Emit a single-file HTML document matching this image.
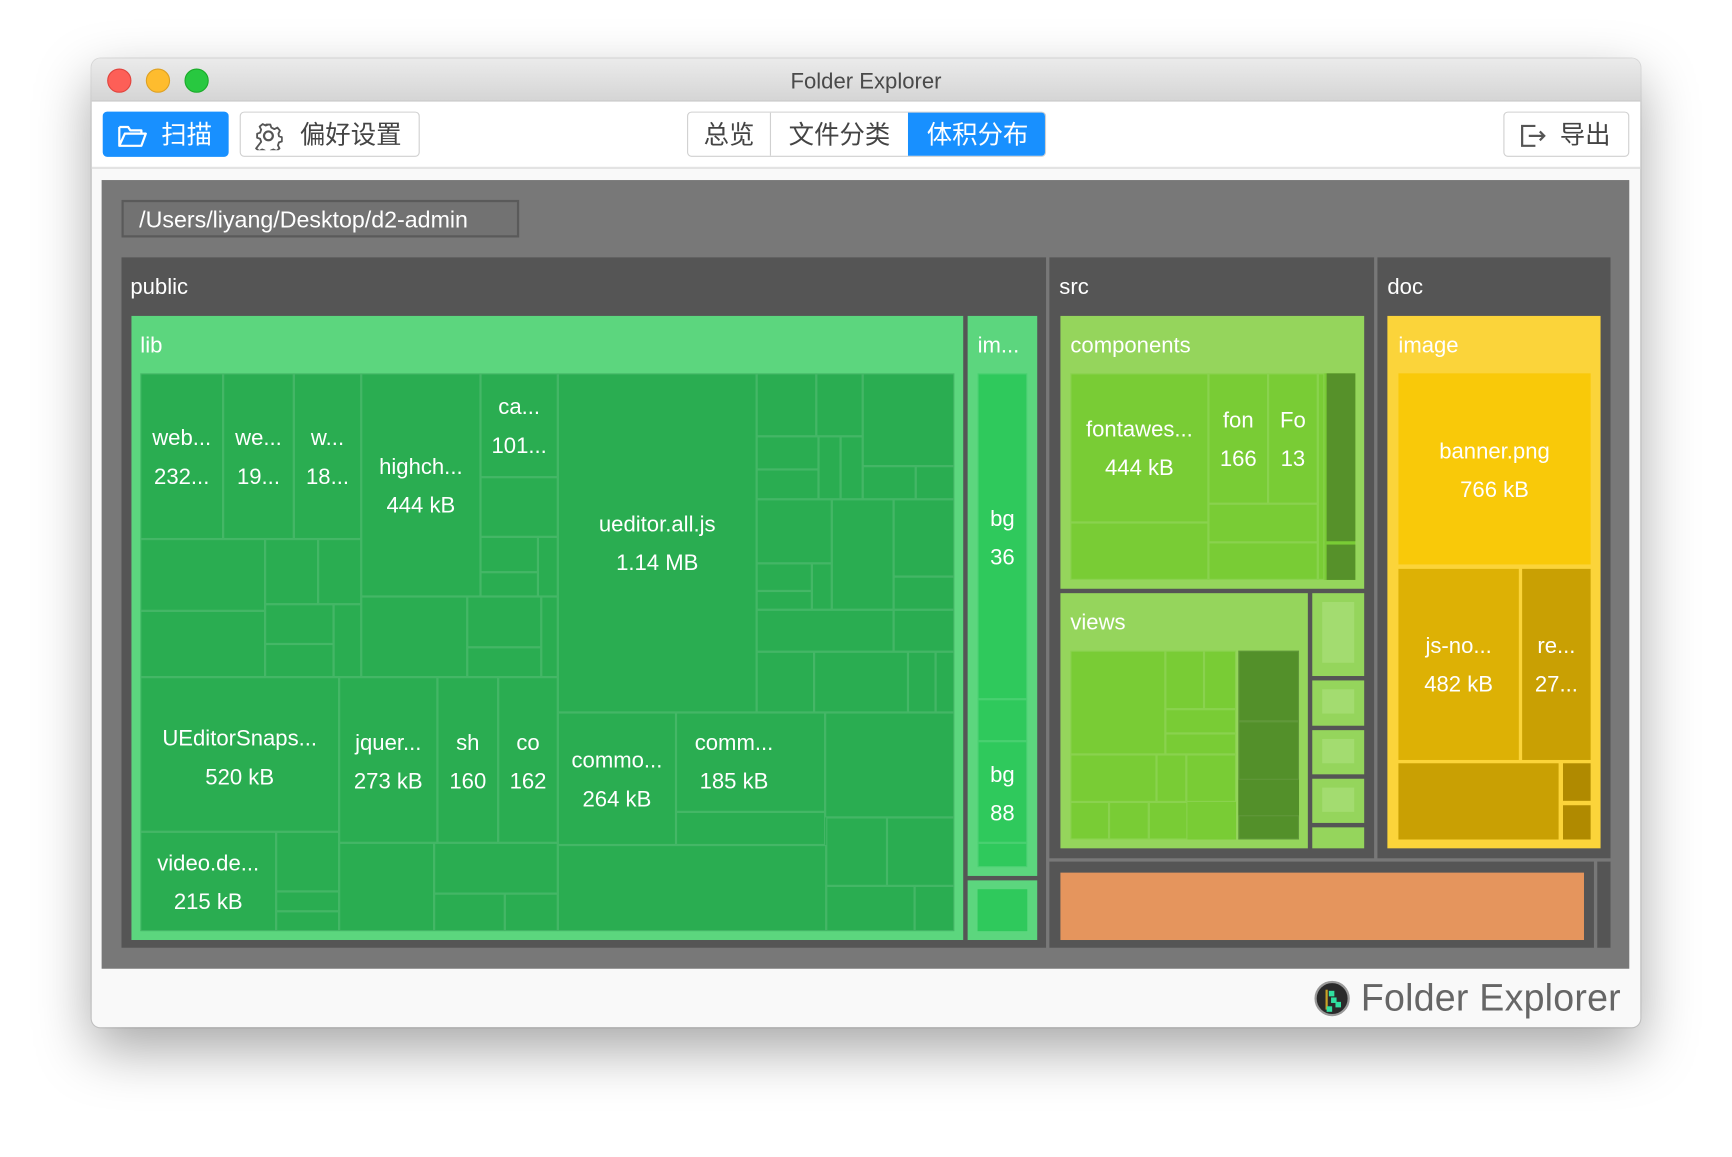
<!DOCTYPE html>
<html><head><meta charset="utf-8"><style>
*{margin:0;padding:0;box-sizing:border-box}
html,body{width:1732px;height:1156px;overflow:hidden;background:#fff;font-family:"Liberation Sans","Noto Sans CJK SC",sans-serif}
#s{position:absolute;left:0;top:0;width:1568px;height:1047px;transform:scale(1.1046);transform-origin:0 0}
.a{position:absolute}
.win{left:83px;top:53px;width:1402px;height:877px;border-radius:8px;background:#f9f9f9;box-shadow:0 20px 50px rgba(0,0,0,.35),0 0 0 1px rgba(0,0,0,.12);overflow:hidden}
.tb{left:0;top:0;width:1402px;height:39px;background:linear-gradient(#ebebeb,#d5d5d5);border-bottom:1px solid #c4c4c4;text-align:center;font-size:20px;line-height:42px;color:#4a4a4a}
.dot{width:22px;height:22px;border-radius:50%;top:9px}
.bar{left:0;top:39px;width:1402px;height:61px;background:#fff;border-bottom:2px solid #e3e3e3}
.btn{height:41px;border:1px solid #d0d0d0;border-radius:4px;background:#fff;color:#444;font-size:23px;line-height:41px;text-align:center}
.c{position:absolute;border:1px solid rgba(255,255,255,.13)}
.t{position:absolute;color:#fff;font-size:20px;text-align:center;line-height:35px;white-space:nowrap;margin-top:2px}
.g{background:#2aad51}
.lbl{position:absolute;color:#fff;font-size:20px;margin-top:2px}
</style></head><body><div id="s">
<div class="a win">
 <div class="a tb">Folder Explorer</div>
 <div class="a dot" style="left:14px;background:#fd5f57;border:1px solid #e0443e"></div>
 <div class="a dot" style="left:49px;background:#febc2e;border:1px solid #dea123"></div>
 <div class="a dot" style="left:84px;background:#28c840;border:1px solid #1aab29"></div>
 <div class="a bar"></div>
 <div class="a btn" style="left:10px;top:48px;width:114px;background:#1890ff;border-color:#1890ff;color:#fff">
  <svg style="position:absolute;left:12px;top:10px" width="28" height="22" viewBox="0 0 28 22"><path d="M2 3h8l2 3h10v3M2 3v17h20l4-11H7L2 20" fill="none" stroke="#fff" stroke-width="2" stroke-linejoin="round"/></svg>
  <span style="margin-left:38px">扫描</span></div>
 <div class="a btn" style="left:134px;top:48px;width:163px">
  <svg style="position:absolute;left:12px;top:8px" width="26" height="26" viewBox="0 0 26 26"><circle cx="13" cy="13" r="4" fill="none" stroke="#555" stroke-width="2"/><path d="M11 2h4l1 3 3 1.5 3-1.5 2.5 3-1.5 3 .5 2.5 3 1v4l-3 1-1 3 1.5 3-3 2.5-3-1.5-2.5 1-1 3h-4l-1-3-2.5-1-3 1.5-3-2.5L6 19l-1-3-3-1v-4l3-1 1-3-1.5-3 3-2.5 3 1.5 2.5-1z" fill="none" stroke="#555" stroke-width="1.8" stroke-linejoin="round" transform="scale(.92) translate(1 1)"/></svg>
  <span style="margin-left:38px">偏好设置</span></div>
 <div class="a btn" style="left:539px;top:48px;width:325px;overflow:hidden">
  <div class="a" style="left:0;top:0;width:75px;height:39px;border-right:1px solid #d0d0d0">总览</div>
  <div class="a" style="left:75px;top:0;width:124px;height:39px">文件分类</div>
  <div class="a" style="left:199px;top:-1px;width:126px;height:41px;background:#1890ff;color:#fff;line-height:43px">体积分布</div>
 </div>
 <div class="a btn" style="left:1278px;top:48px;width:114px">
  <svg style="position:absolute;left:14px;top:10px" width="24" height="22" viewBox="0 0 24 22"><path d="M14 2H2v18h12M8 11h14M18 7l4 4-4 4" fill="none" stroke="#555" stroke-width="2"/></svg>
  <span style="margin-left:34px">导出</span></div>
 <div class="a" style="left:1107px;top:835px;width:32px;height:32px;border-radius:50%;background:#2a2a2a;border:2px solid #999">
  <div class="a" style="left:8px;top:6px;width:2px;height:18px;background:#c9a227"></div>
  <div class="a" style="left:11px;top:7px;width:5px;height:5px;background:#30e0a0"></div>
  <div class="a" style="left:13px;top:13px;width:5px;height:5px;background:#30e0a0"></div>
  <div class="a" style="left:17px;top:17px;width:5px;height:5px;background:#30e0a0"></div>
  <div class="a" style="left:9px;top:21px;width:5px;height:5px;background:#30e0a0"></div>
 </div>
 <div class="a" style="left:1149px;top:832px;font-size:34px;color:#666;letter-spacing:.2px">Folder Explorer</div>
</div>

<div class="a" style="left:92px;top:163px;width:1383px;height:714px;background:#787878"></div>
<div class="a" style="left:110px;top:181px;width:360px;height:34px;border:2px solid #5a5a5a;background:#727272;color:#fff;font-size:21px;line-height:33px;padding-left:14px">/Users/liyang/Desktop/d2-admin</div>

<!-- public -->
<div class="a" style="left:110px;top:233px;width:837px;height:625px;background:#555"></div>
<div class="lbl" style="left:118px;top:247px">public</div>
<div class="a" style="left:119px;top:286px;width:753px;height:565px;background:#5cd67e"></div>
<div class="lbl" style="left:127px;top:300px">lib</div>
<div class="a g" style="left:127px;top:338px;width:737px;height:505px"></div>
<div class="c" style="left:127px;top:338px;width:75px;height:150px"></div>
<div class="c" style="left:202px;top:338px;width:64px;height:150px"></div>
<div class="c" style="left:266px;top:338px;width:61px;height:150px"></div>
<div class="c" style="left:327px;top:338px;width:108px;height:202px"></div>
<div class="c" style="left:435px;top:338px;width:70px;height:94px"></div>
<div class="c" style="left:435px;top:432px;width:70px;height:54px"></div>
<div class="c" style="left:435px;top:486px;width:52px;height:32px"></div>
<div class="c" style="left:435px;top:518px;width:52px;height:22px"></div>
<div class="c" style="left:487px;top:486px;width:18px;height:54px"></div>
<div class="c" style="left:505px;top:338px;width:180px;height:307px"></div>
<div class="c" style="left:685px;top:338px;width:54px;height:57px"></div>
<div class="c" style="left:739px;top:338px;width:42px;height:57px"></div>
<div class="c" style="left:781px;top:338px;width:83px;height:84px"></div>
<div class="c" style="left:685px;top:395px;width:56px;height:30px"></div>
<div class="c" style="left:685px;top:425px;width:56px;height:27px"></div>
<div class="c" style="left:741px;top:395px;width:20px;height:57px"></div>
<div class="c" style="left:761px;top:395px;width:20px;height:57px"></div>
<div class="c" style="left:781px;top:422px;width:48px;height:30px"></div>
<div class="c" style="left:829px;top:422px;width:35px;height:30px"></div>
<div class="c" style="left:685px;top:452px;width:68px;height:58px"></div>
<div class="c" style="left:753px;top:452px;width:56px;height:100px"></div>
<div class="c" style="left:809px;top:452px;width:55px;height:70px"></div>
<div class="c" style="left:685px;top:510px;width:50px;height:25px"></div>
<div class="c" style="left:685px;top:535px;width:50px;height:17px"></div>
<div class="c" style="left:735px;top:510px;width:18px;height:42px"></div>
<div class="c" style="left:809px;top:522px;width:55px;height:30px"></div>
<div class="c" style="left:685px;top:552px;width:124px;height:38px"></div>
<div class="c" style="left:809px;top:552px;width:55px;height:38px"></div>
<div class="c" style="left:685px;top:590px;width:52px;height:55px"></div>
<div class="c" style="left:737px;top:590px;width:85px;height:55px"></div>
<div class="c" style="left:822px;top:590px;width:25px;height:55px"></div>
<div class="c" style="left:847px;top:590px;width:17px;height:55px"></div>
<div class="c" style="left:127px;top:488px;width:113px;height:65px"></div>
<div class="c" style="left:127px;top:553px;width:113px;height:60px"></div>
<div class="c" style="left:240px;top:488px;width:48px;height:59px"></div>
<div class="c" style="left:288px;top:488px;width:39px;height:59px"></div>
<div class="c" style="left:240px;top:547px;width:62px;height:36px"></div>
<div class="c" style="left:240px;top:583px;width:62px;height:30px"></div>
<div class="c" style="left:302px;top:547px;width:25px;height:66px"></div>
<div class="c" style="left:327px;top:540px;width:96px;height:73px"></div>
<div class="c" style="left:423px;top:540px;width:67px;height:46px"></div>
<div class="c" style="left:423px;top:586px;width:67px;height:27px"></div>
<div class="c" style="left:490px;top:540px;width:15px;height:73px"></div>
<div class="c" style="left:127px;top:613px;width:180px;height:140px"></div>
<div class="c" style="left:127px;top:753px;width:123px;height:90px"></div>
<div class="c" style="left:250px;top:753px;width:57px;height:54px"></div>
<div class="c" style="left:250px;top:807px;width:57px;height:18px"></div>
<div class="c" style="left:250px;top:825px;width:57px;height:18px"></div>
<div class="c" style="left:307px;top:613px;width:89px;height:150px"></div>
<div class="c" style="left:396px;top:613px;width:55px;height:150px"></div>
<div class="c" style="left:451px;top:613px;width:54px;height:150px"></div>
<div class="c" style="left:307px;top:763px;width:86px;height:80px"></div>
<div class="c" style="left:393px;top:763px;width:112px;height:46px"></div>
<div class="c" style="left:393px;top:809px;width:64px;height:34px"></div>
<div class="c" style="left:457px;top:809px;width:48px;height:34px"></div>
<div class="c" style="left:505px;top:645px;width:107px;height:120px"></div>
<div class="c" style="left:612px;top:645px;width:135px;height:90px"></div>
<div class="c" style="left:612px;top:735px;width:135px;height:30px"></div>
<div class="c" style="left:747px;top:645px;width:117px;height:95px"></div>
<div class="c" style="left:505px;top:765px;width:243px;height:78px"></div>
<div class="c" style="left:748px;top:740px;width:55px;height:62px"></div>
<div class="c" style="left:803px;top:740px;width:61px;height:62px"></div>
<div class="c" style="left:748px;top:802px;width:80px;height:41px"></div>
<div class="c" style="left:828px;top:802px;width:36px;height:41px"></div>
<div class="t" style="left:127px;top:378px;width:75px">web...<br>232...</div>
<div class="t" style="left:202px;top:378px;width:64px">we...<br>19...</div>
<div class="t" style="left:266px;top:378px;width:61px">w...<br>18...</div>
<div class="t" style="left:327px;top:404px;width:108px">highch...<br>444 kB</div>
<div class="t" style="left:435px;top:350px;width:70px">ca...<br>101...</div>
<div class="t" style="left:505px;top:456px;width:180px">ueditor.all.js<br>1.14 MB</div>
<div class="t" style="left:127px;top:650px;width:180px">UEditorSnaps...<br>520 kB</div>
<div class="t" style="left:127px;top:763px;width:123px">video.de...<br>215 kB</div>
<div class="t" style="left:307px;top:654px;width:89px">jquer...<br>273 kB</div>
<div class="t" style="left:396px;top:654px;width:55px">sh<br>160</div>
<div class="t" style="left:451px;top:654px;width:54px">co<br>162</div>
<div class="t" style="left:505px;top:670px;width:107px">commo...<br>264 kB</div>
<div class="t" style="left:612px;top:654px;width:105px">comm...<br>185 kB</div>
<!-- im -->
<div class="a" style="left:876px;top:286px;width:63px;height:507px;background:#5cd67e"></div>
<div class="lbl" style="left:885px;top:300px">im...</div>
<div class="a" style="left:885px;top:338px;width:45px;height:447px;background:#2fc95c"></div>
<div class="c" style="left:885px;top:338px;width:45px;height:295px"></div>
<div class="c" style="left:885px;top:633px;width:45px;height:38px"></div>
<div class="c" style="left:885px;top:671px;width:45px;height:92px"></div>
<div class="c" style="left:885px;top:763px;width:45px;height:22px"></div>
<div class="t" style="left:885px;top:451px;width:45px">bg<br>36</div>
<div class="t" style="left:885px;top:683px;width:45px">bg<br>88</div>
<div class="a" style="left:876px;top:797px;width:63px;height:54px;background:#5cd67e"></div>
<div class="a" style="left:885px;top:805px;width:45px;height:38px;background:#2fc95c"></div>

<!-- src -->
<div class="a" style="left:950px;top:233px;width:294px;height:544px;background:#555"></div>
<div class="lbl" style="left:959px;top:247px">src</div>
<div class="a" style="left:960px;top:286px;width:275px;height:247px;background:#95d55c"></div>
<div class="lbl" style="left:969px;top:300px">components</div>
<div class="a" style="left:969px;top:338px;width:258px;height:187px;background:#79cc35"></div>
<div class="c" style="left:969px;top:338px;width:125px;height:135px"></div>
<div class="c" style="left:969px;top:473px;width:125px;height:52px"></div>
<div class="c" style="left:1094px;top:338px;width:54px;height:118px"></div>
<div class="c" style="left:1148px;top:338px;width:45px;height:118px"></div>
<div class="c" style="left:1094px;top:456px;width:99px;height:35px"></div>
<div class="c" style="left:1094px;top:491px;width:99px;height:34px"></div>
<div class="c" style="left:1193px;top:338px;width:6px;height:187px"></div>
<div class="a" style="left:1201px;top:338px;width:26px;height:152px;background:#56912a"></div>
<div class="a" style="left:1201px;top:493px;width:26px;height:32px;background:#56912a"></div>
<div class="t" style="left:969px;top:370px;width:125px">fontawes...<br>444 kB</div>
<div class="t" style="left:1094px;top:362px;width:54px">fon<br>166</div>
<div class="t" style="left:1148px;top:362px;width:45px">Fo<br>13</div>
<div class="a" style="left:960px;top:537px;width:224px;height:231px;background:#95d55c"></div>
<div class="lbl" style="left:969px;top:551px">views</div>
<div class="a" style="left:969px;top:589px;width:150px;height:171px;background:#79cc35"></div>
<div class="c" style="left:969px;top:589px;width:86px;height:94px"></div>
<div class="c" style="left:1055px;top:589px;width:35px;height:53px"></div>
<div class="c" style="left:1090px;top:589px;width:29px;height:53px"></div>
<div class="c" style="left:1055px;top:642px;width:64px;height:22px"></div>
<div class="c" style="left:1055px;top:664px;width:64px;height:19px"></div>
<div class="c" style="left:969px;top:683px;width:78px;height:43px"></div>
<div class="c" style="left:1047px;top:683px;width:27px;height:43px"></div>
<div class="c" style="left:1074px;top:683px;width:45px;height:43px"></div>
<div class="c" style="left:969px;top:726px;width:35px;height:34px"></div>
<div class="c" style="left:1004px;top:726px;width:36px;height:34px"></div>
<div class="c" style="left:1040px;top:726px;width:35px;height:34px"></div>
<div class="a" style="left:1121px;top:589px;width:55px;height:171px;background:#53902a"></div>
<div class="c" style="left:1121px;top:589px;width:55px;height:64px;border-color:rgba(255,255,255,.08)"></div>
<div class="c" style="left:1121px;top:653px;width:55px;height:53px;border-color:rgba(255,255,255,.08)"></div>
<div class="c" style="left:1121px;top:738px;width:55px;height:22px;border-color:rgba(255,255,255,.08)"></div>
<div class="a" style="left:1188px;top:537px;width:47px;height:75px;background:#95d55c"></div>
<div class="a" style="left:1197px;top:545px;width:29px;height:55px;background:#a3dc70"></div>
<div class="a" style="left:1188px;top:616px;width:47px;height:41px;background:#95d55c"></div>
<div class="a" style="left:1197px;top:624px;width:29px;height:22px;background:#a3dc70"></div>
<div class="a" style="left:1188px;top:661px;width:47px;height:40px;background:#95d55c"></div>
<div class="a" style="left:1197px;top:669px;width:29px;height:22px;background:#a3dc70"></div>
<div class="a" style="left:1188px;top:705px;width:47px;height:40px;background:#95d55c"></div>
<div class="a" style="left:1197px;top:713px;width:29px;height:22px;background:#a3dc70"></div>
<div class="a" style="left:1188px;top:749px;width:47px;height:19px;background:#95d55c"></div>

<!-- doc -->
<div class="a" style="left:1247px;top:233px;width:211px;height:544px;background:#555"></div>
<div class="lbl" style="left:1256px;top:247px">doc</div>
<div class="a" style="left:1256px;top:286px;width:193px;height:482px;background:#fbd43a"></div>
<div class="lbl" style="left:1266px;top:300px">image</div>
<div class="a" style="left:1266px;top:338px;width:174px;height:173px;background:#f9c909"></div>
<div class="t" style="left:1266px;top:390px;width:174px">banner.png<br>766 kB</div>
<div class="a" style="left:1266px;top:515px;width:109px;height:173px;background:#ddb105"></div>
<div class="t" style="left:1266px;top:566px;width:109px">js-no...<br>482 kB</div>
<div class="a" style="left:1378px;top:515px;width:62px;height:173px;background:#c9a003"></div>
<div class="t" style="left:1378px;top:566px;width:62px">re...<br>27...</div>
<div class="a" style="left:1266px;top:691px;width:145px;height:69px;background:#c9a003"></div>
<div class="a" style="left:1415px;top:691px;width:25px;height:34px;background:#b08a00"></div>
<div class="a" style="left:1415px;top:729px;width:25px;height:31px;background:#b08a00"></div>

<!-- bottom strip -->
<div class="a" style="left:950px;top:780px;width:493px;height:78px;background:#555"></div>
<div class="a" style="left:960px;top:790px;width:474px;height:61px;background:#e5955d"></div>
<div class="a" style="left:1446px;top:780px;width:12px;height:78px;background:#555"></div>
</div></body></html>
